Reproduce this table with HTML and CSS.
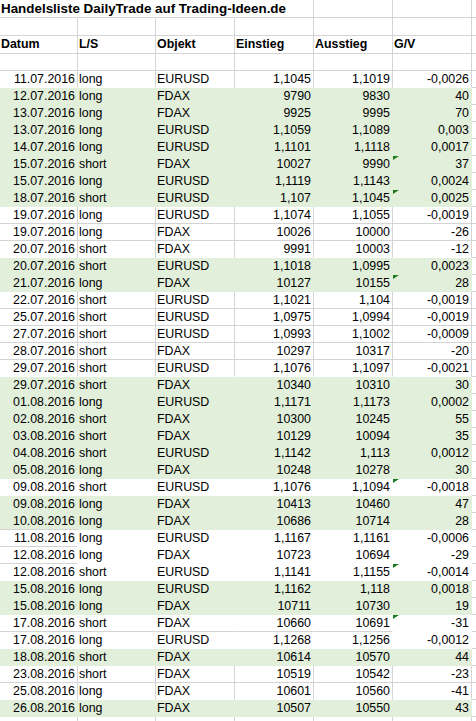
FILE: index.html
```html
<!DOCTYPE html>
<html lang="de">
<head>
    <meta charset="UTF-8">
    <meta name="viewport" content="width=device-width, initial-scale=1.0">
    <title>Handelsliste DailyTrade</title>
    <link rel="stylesheet" href="styles.css">
</head>
<body>
    <div class="sheet">
        <div class="row tall">
            <div class="cell flow title">Handelsliste DailyTrade auf Trading-Ideen.de</div>
            <div class="cell flow"></div><div class="cell flow"></div><div class="cell"></div><div class="cell"></div><div class="cell"></div><div class="cell g"></div>
        </div>
        <div class="row tall">
            <div class="cell"></div><div class="cell"></div><div class="cell"></div><div class="cell"></div><div class="cell"></div><div class="cell"></div><div class="cell g"></div>
        </div>
        <div class="row tall head">
            <div class="cell">Datum</div><div class="cell">L/S</div><div class="cell">Objekt</div><div class="cell">Einstieg</div><div class="cell">Ausstieg</div><div class="cell">G/V</div><div class="cell g"></div>
        </div>
        <div class="row">
            <div class="cell"></div><div class="cell"></div><div class="cell"></div><div class="cell"></div><div class="cell"></div><div class="cell"></div><div class="cell g"></div>
        </div>

        <!-- trades -->
        <div class="row cut">
            <div class="cell num">11.07.2016</div><div class="cell">long</div><div class="cell">EURUSD</div><div class="cell num">1,1045</div><div class="cell num">1,1019</div><div class="cell num">-0,0026</div><div class="cell g"></div>
        </div>
        <div class="row fill">
            <div class="cell num">12.07.2016</div><div class="cell">long</div><div class="cell">FDAX</div><div class="cell num">9790</div><div class="cell num">9830</div><div class="cell num">40</div><div class="cell g"></div>
        </div>
        <div class="row fill">
            <div class="cell num">13.07.2016</div><div class="cell">long</div><div class="cell">FDAX</div><div class="cell num">9925</div><div class="cell num">9995</div><div class="cell num">70</div><div class="cell g"></div>
        </div>
        <div class="row fill">
            <div class="cell num">13.07.2016</div><div class="cell">long</div><div class="cell">EURUSD</div><div class="cell num">1,1059</div><div class="cell num">1,1089</div><div class="cell num">0,003</div><div class="cell g"></div>
        </div>
        <div class="row fill">
            <div class="cell num">14.07.2016</div><div class="cell">long</div><div class="cell">EURUSD</div><div class="cell num">1,1101</div><div class="cell num">1,1118</div><div class="cell num">0,0017</div><div class="cell g"></div>
        </div>
        <div class="row fill">
            <div class="cell num">15.07.2016</div><div class="cell">short</div><div class="cell">FDAX</div><div class="cell num">10027</div><div class="cell num">9990</div><div class="cell num flag">37</div><div class="cell g"></div>
        </div>
        <div class="row fill">
            <div class="cell num">15.07.2016</div><div class="cell">long</div><div class="cell">EURUSD</div><div class="cell num">1,1119</div><div class="cell num">1,1143</div><div class="cell num">0,0024</div><div class="cell g"></div>
        </div>
        <div class="row fill">
            <div class="cell num">18.07.2016</div><div class="cell">short</div><div class="cell">EURUSD</div><div class="cell num">1,107</div><div class="cell num">1,1045</div><div class="cell num flag">0,0025</div><div class="cell g"></div>
        </div>
        <div class="row">
            <div class="cell num">19.07.2016</div><div class="cell">long</div><div class="cell">EURUSD</div><div class="cell num">1,1074</div><div class="cell num">1,1055</div><div class="cell num">-0,0019</div><div class="cell g"></div>
        </div>
        <div class="row">
            <div class="cell num">19.07.2016</div><div class="cell">long</div><div class="cell">FDAX</div><div class="cell num">10026</div><div class="cell num">10000</div><div class="cell num">-26</div><div class="cell g"></div>
        </div>
        <div class="row cut">
            <div class="cell num">20.07.2016</div><div class="cell">short</div><div class="cell">FDAX</div><div class="cell num">9991</div><div class="cell num">10003</div><div class="cell num">-12</div><div class="cell g"></div>
        </div>
        <div class="row fill">
            <div class="cell num">20.07.2016</div><div class="cell">short</div><div class="cell">EURUSD</div><div class="cell num">1,1018</div><div class="cell num">1,0995</div><div class="cell num">0,0023</div><div class="cell g"></div>
        </div>
        <div class="row fill">
            <div class="cell num">21.07.2016</div><div class="cell">long</div><div class="cell">FDAX</div><div class="cell num">10127</div><div class="cell num">10155</div><div class="cell num flag">28</div><div class="cell g"></div>
        </div>
        <div class="row">
            <div class="cell num">22.07.2016</div><div class="cell">short</div><div class="cell">EURUSD</div><div class="cell num">1,1021</div><div class="cell num">1,104</div><div class="cell num">-0,0019</div><div class="cell g"></div>
        </div>
        <div class="row">
            <div class="cell num">25.07.2016</div><div class="cell">short</div><div class="cell">EURUSD</div><div class="cell num">1,0975</div><div class="cell num">1,0994</div><div class="cell num">-0,0019</div><div class="cell g"></div>
        </div>
        <div class="row">
            <div class="cell num">27.07.2016</div><div class="cell">short</div><div class="cell">EURUSD</div><div class="cell num">1,0993</div><div class="cell num">1,1002</div><div class="cell num">-0,0009</div><div class="cell g"></div>
        </div>
        <div class="row">
            <div class="cell num">28.07.2016</div><div class="cell">short</div><div class="cell">FDAX</div><div class="cell num">10297</div><div class="cell num">10317</div><div class="cell num">-20</div><div class="cell g"></div>
        </div>
        <div class="row cut">
            <div class="cell num">29.07.2016</div><div class="cell">short</div><div class="cell">EURUSD</div><div class="cell num">1,1076</div><div class="cell num">1,1097</div><div class="cell num">-0,0021</div><div class="cell g"></div>
        </div>
        <div class="row fill">
            <div class="cell num">29.07.2016</div><div class="cell">short</div><div class="cell">FDAX</div><div class="cell num">10340</div><div class="cell num">10310</div><div class="cell num">30</div><div class="cell g"></div>
        </div>
        <div class="row fill">
            <div class="cell num">01.08.2016</div><div class="cell">long</div><div class="cell">EURUSD</div><div class="cell num">1,1171</div><div class="cell num">1,1173</div><div class="cell num">0,0002</div><div class="cell g"></div>
        </div>
        <div class="row fill">
            <div class="cell num">02.08.2016</div><div class="cell">short</div><div class="cell">FDAX</div><div class="cell num">10300</div><div class="cell num">10245</div><div class="cell num">55</div><div class="cell g"></div>
        </div>
        <div class="row fill">
            <div class="cell num">03.08.2016</div><div class="cell">short</div><div class="cell">FDAX</div><div class="cell num">10129</div><div class="cell num">10094</div><div class="cell num">35</div><div class="cell g"></div>
        </div>
        <div class="row fill">
            <div class="cell num">04.08.2016</div><div class="cell">short</div><div class="cell">EURUSD</div><div class="cell num">1,1142</div><div class="cell num">1,113</div><div class="cell num">0,0012</div><div class="cell g"></div>
        </div>
        <div class="row fill">
            <div class="cell num">05.08.2016</div><div class="cell">long</div><div class="cell">FDAX</div><div class="cell num">10248</div><div class="cell num">10278</div><div class="cell num">30</div><div class="cell g"></div>
        </div>
        <div class="row blank">
            <div class="cell num">09.08.2016</div><div class="cell">short</div><div class="cell">EURUSD</div><div class="cell num">1,1076</div><div class="cell num">1,1094</div><div class="cell num flag">-0,0018</div><div class="cell g"></div>
        </div>
        <div class="row fill">
            <div class="cell num">09.08.2016</div><div class="cell">long</div><div class="cell">FDAX</div><div class="cell num">10413</div><div class="cell num">10460</div><div class="cell num">47</div><div class="cell g"></div>
        </div>
        <div class="row fill">
            <div class="cell num line">10.08.2016</div><div class="cell">long</div><div class="cell">FDAX</div><div class="cell num">10686</div><div class="cell num">10714</div><div class="cell num">28</div><div class="cell g"></div>
        </div>
        <div class="row blank">
            <div class="cell num line">11.08.2016</div><div class="cell">long</div><div class="cell">EURUSD</div><div class="cell num">1,1167</div><div class="cell num">1,1161</div><div class="cell num">-0,0006</div><div class="cell g"></div>
        </div>
        <div class="row blank">
            <div class="cell num line">12.08.2016</div><div class="cell">long</div><div class="cell">FDAX</div><div class="cell num">10723</div><div class="cell num">10694</div><div class="cell num">-29</div><div class="cell g"></div>
        </div>
        <div class="row blank">
            <div class="cell num">12.08.2016</div><div class="cell">short</div><div class="cell">EURUSD</div><div class="cell num">1,1141</div><div class="cell num">1,1155</div><div class="cell num flag">-0,0014</div><div class="cell g"></div>
        </div>
        <div class="row fill">
            <div class="cell num">15.08.2016</div><div class="cell">long</div><div class="cell">EURUSD</div><div class="cell num">1,1162</div><div class="cell num">1,118</div><div class="cell num">0,0018</div><div class="cell g"></div>
        </div>
        <div class="row fill">
            <div class="cell num">15.08.2016</div><div class="cell">long</div><div class="cell">FDAX</div><div class="cell num">10711</div><div class="cell num">10730</div><div class="cell num">19</div><div class="cell g"></div>
        </div>
        <div class="row blank">
            <div class="cell num line">17.08.2016</div><div class="cell line">short</div><div class="cell line">FDAX</div><div class="cell num line">10660</div><div class="cell num line">10691</div><div class="cell num flag">-31</div><div class="cell g"></div>
        </div>
        <div class="row blank">
            <div class="cell num">17.08.2016</div><div class="cell">long</div><div class="cell">EURUSD</div><div class="cell num">1,1268</div><div class="cell num">1,1256</div><div class="cell num">-0,0012</div><div class="cell g"></div>
        </div>
        <div class="row fill">
            <div class="cell num">18.08.2016</div><div class="cell">short</div><div class="cell">FDAX</div><div class="cell num">10614</div><div class="cell num">10570</div><div class="cell num">44</div><div class="cell g"></div>
        </div>
        <div class="row">
            <div class="cell num">23.08.2016</div><div class="cell">short</div><div class="cell">FDAX</div><div class="cell num">10519</div><div class="cell num">10542</div><div class="cell num">-23</div><div class="cell g"></div>
        </div>
        <div class="row cut">
            <div class="cell num">25.08.2016</div><div class="cell">long</div><div class="cell">FDAX</div><div class="cell num">10601</div><div class="cell num">10560</div><div class="cell num">-41</div><div class="cell g"></div>
        </div>
        <div class="row fill">
            <div class="cell num">26.08.2016</div><div class="cell">long</div><div class="cell">FDAX</div><div class="cell num">10507</div><div class="cell num">10550</div><div class="cell num">43</div><div class="cell g"></div>
        </div>
        <div class="row">
            <div class="cell"></div><div class="cell"></div><div class="cell"></div><div class="cell"></div><div class="cell"></div><div class="cell"></div><div class="cell g"></div>
        </div>
    </div>
</body>
</html>
```

FILE: styles.css
```css
html, body {
    margin: 0;
    padding: 0;
    overflow: hidden;
    background: #fff;
}

body {
    font-family: "Liberation Sans", Arial, sans-serif;
    font-size: 12.4px;
    color: #000;
}

.sheet {
    width: 100%;
}

.row {
    display: grid;
    grid-template-columns: 78px 78px 79px 79px 79px 79px 1fr;
    height: 17px;
    line-height: 16px;
}

.row.tall {
    height: 18px;
    line-height: 17px;
}

.cell {
    position: relative;
    box-sizing: border-box;
    border-right: 1px solid #d4d4d4;
    border-bottom: 1px solid #d4d4d4;
    padding: 0 2px 0 1px;
    white-space: nowrap;
}

.num {
    text-align: right;
}

.head .cell {
    font-weight: bold;
}

/* text running over the next cells */
.title {
    font-size: 13.4px;
    font-weight: bold;
    overflow: visible;
}

.flow {
    border-right-color: transparent;
}

/* green filled trades */
.fill .cell {
    background: #e2efda;
    border-color: #e2efda;
}

/* white filled cells hide the grid */
.blank .cell {
    border-color: #fff;
}

.cut .cell {
    border-bottom-color: #fff;
}

.fill .cell.line,
.blank .cell.line {
    border-bottom-color: #d4d4d4;
}

/* last column, only partly in view */
.cell.g,
.fill .cell.g,
.blank .cell.g,
.cut .cell.g {
    background: none;
    border-right: none;
    border-bottom-color: #d4d4d4;
    padding: 0;
}

/* excel error marker */
.flag::before {
    content: "";
    position: absolute;
    left: 0;
    top: 0;
    border-top: 4px solid #1d7a1d;
    border-right: 6px solid transparent;
}
```
